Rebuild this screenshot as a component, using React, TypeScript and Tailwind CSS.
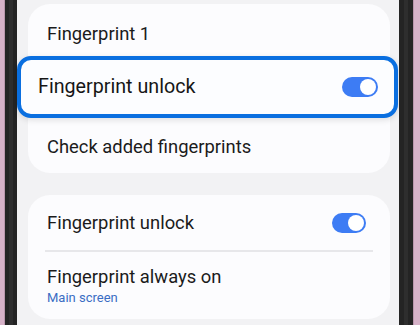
import React from "react";

const font = { fontFamily: "Roboto, 'Noto Sans', sans-serif" };

function Toggle({ big = false }: { big?: boolean }) {
  return (
    <div
      className={
        big
          ? "flex h-[20px] w-[36px] items-center justify-end rounded-full bg-[#3d7cf4] px-[2px]"
          : "flex h-[20px] w-[34px] items-center justify-end rounded-full bg-[#3d7cf4] px-[2px]"
      }
    >
      <div className="h-[16px] w-[16px] rounded-full bg-white" />
    </div>
  );
}

export default function App() {
  return (
    <div className="flex h-[325px] w-[420px] overflow-hidden" style={font}>
      <div className="w-[4px] bg-[#d6b2c8]" />
      <div className="w-[1px] bg-[#b996ac]" />
      <div className="flex w-[12px] bg-[#242424]">
        <div className="w-[4px]" />
        <div className="w-[4px] bg-[#2e2e2e]" />
      </div>
      <div className="flex w-[382px] flex-col bg-[#f2f2f4] pl-[11px] pr-[9px] pt-[4px]">
        <div className="flex flex-col rounded-[22px] bg-[#fcfcfe]">
          <div className="h-[52px] pl-[19px] pt-[18px] text-[18.4px] leading-[24px] text-[#1b1b1b]">
            Fingerprint 1
          </div>
          <div className="-ml-[11px] -mr-[8px] flex h-[62px] items-center justify-between rounded-[14px] border-4 border-[#0a6fe0] bg-[#fcfdff] pl-[17px] pr-[16px] shadow-[0_2px_6px_rgba(0,0,0,0.12)]">
            <span className="text-[19.7px] leading-[26px] text-[#161616]">Fingerprint unlock</span>
            <Toggle big />
          </div>
          <div className="h-[55px] pl-[19px] pt-[17px] text-[18.4px] leading-[24px] text-[#1b1b1b]">
            Check added fingerprints
          </div>
        </div>
        <div className="mt-[22px] flex flex-col rounded-[22px] bg-[#fcfcfe] px-[17px]">
          <div className="flex h-[55px] items-center justify-between pl-[2px] pr-[7px] pt-[1px]">
            <span className="text-[18.4px] leading-[24px] text-[#1b1b1b]">Fingerprint unlock</span>
            <Toggle />
          </div>
          <div className="h-[1.5px] bg-[#e7e7ea]" />
          <div className="flex flex-col pb-[13px] pl-[2px] pt-[13px]">
            <span className="text-[18.4px] leading-[24px] text-[#1b1b1b]">Fingerprint always on</span>
            <span className="mt-[1px] text-[13px] leading-[16px] text-[#3a6dc4]">Main screen</span>
          </div>
        </div>
      </div>
      <div className="flex w-[14px] bg-[#242424]">
        <div className="w-[5px]" />
        <div className="w-[4px] bg-[#2e2e2e]" />
      </div>
      <div className="w-[1px] bg-[#b996ac]" />
      <div className="w-[6px] bg-[#d6b2c8]" />
    </div>
  );
}
